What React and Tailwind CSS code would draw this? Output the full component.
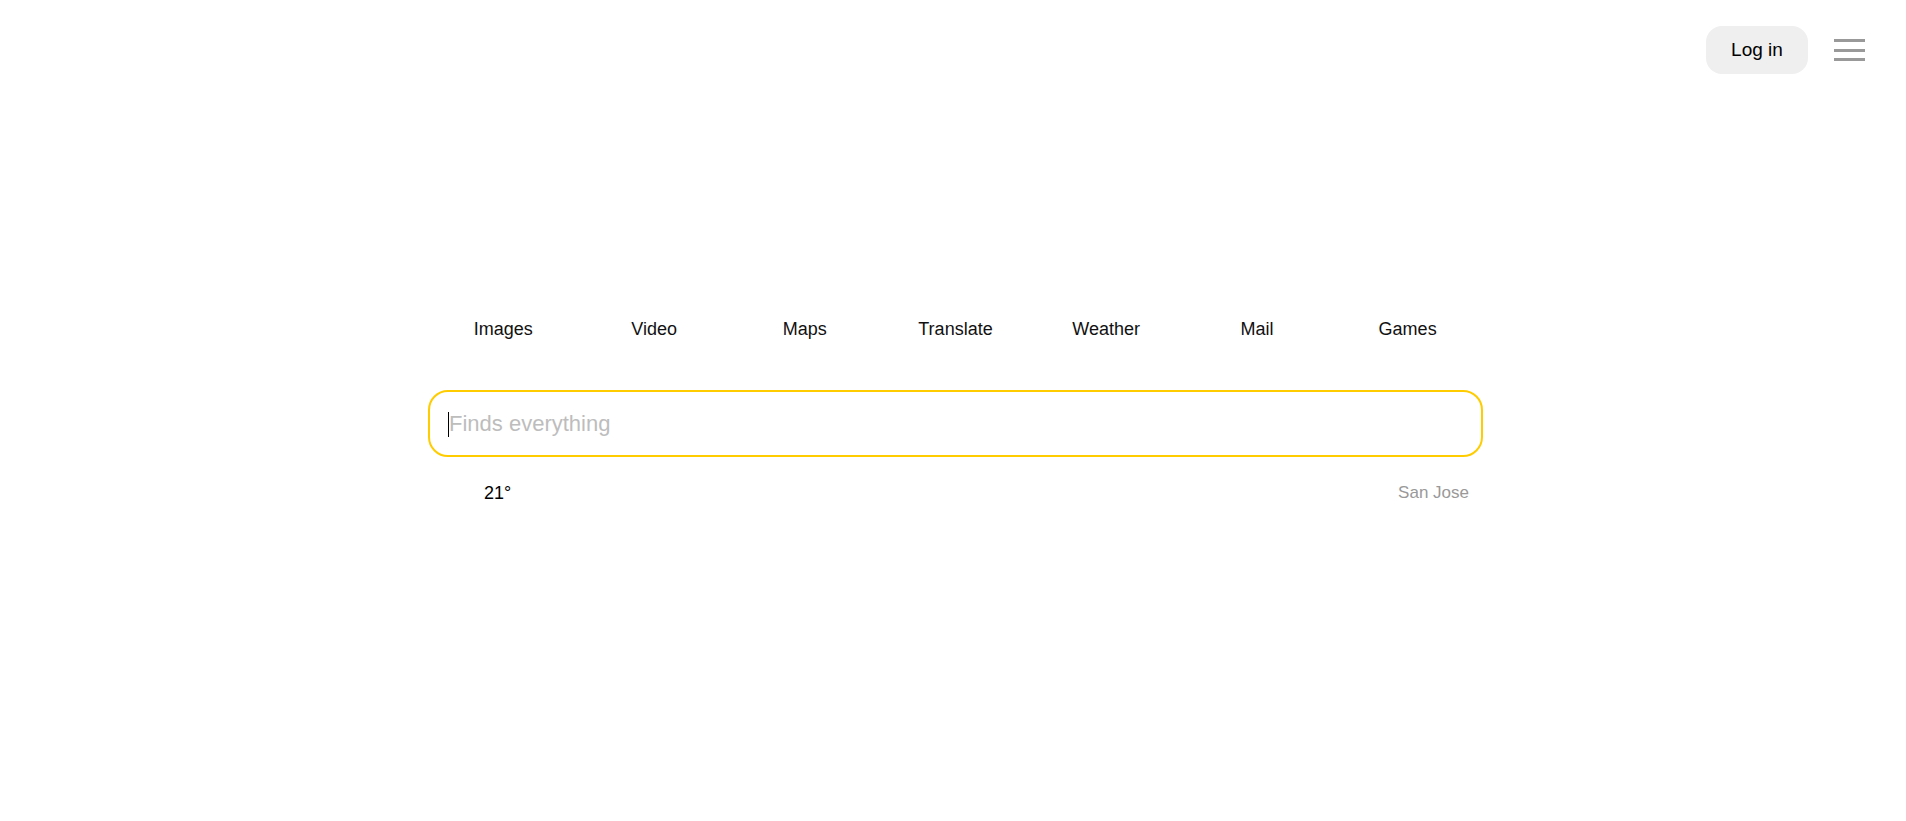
export default function App() {
  const nav = ["Images", "Video", "Maps", "Translate", "Weather", "Mail", "Games"];
  return (
    <div className="min-h-[821px] w-full bg-white font-['Liberation_Sans',Arial,sans-serif]">
      <header className="flex items-center justify-end gap-[26px] pt-[26px] pr-[41px]">
        <button className="h-[48px] w-[102px] rounded-[16px] bg-[#efefef] text-[19px] text-black">
          Log in
        </button>
        <button className="flex h-[22px] w-[31px] flex-col justify-between" aria-label="menu">
          <span className="block h-[3px] w-full bg-[#999999]"></span>
          <span className="block h-[3px] w-full bg-[#999999]"></span>
          <span className="block h-[3px] w-full bg-[#999999]"></span>
        </button>
      </header>
      <main className="ml-[428px] mt-[243px] w-[1055px]">
        <nav className="grid grid-cols-7">
          {nav.map((n) => (
            <a key={n} className="text-center text-[18px] leading-[24px] text-[#111]">
              {n}
            </a>
          ))}
        </nav>
        <div className="relative mt-[49px] h-[67px] w-full rounded-[20px] border-2 border-[#ffcc00]">
          <input
            className="h-full w-full bg-transparent pl-[19px] text-[22px] text-black outline-none placeholder:text-[#bdbdbd]"
            placeholder="Finds everything"
          />
          <span className="pointer-events-none absolute left-[18px] top-[20px] h-[25px] w-[1px] bg-black"></span>
        </div>
        <div className="mt-[24px] flex items-center justify-between pl-[56px] pr-[14px]">
          <span className="text-[18px] leading-[24px] text-black">21°</span>
          <span className="text-[17px] leading-[24px] text-[#999999]">San Jose</span>
        </div>
      </main>
    </div>
  );
}
